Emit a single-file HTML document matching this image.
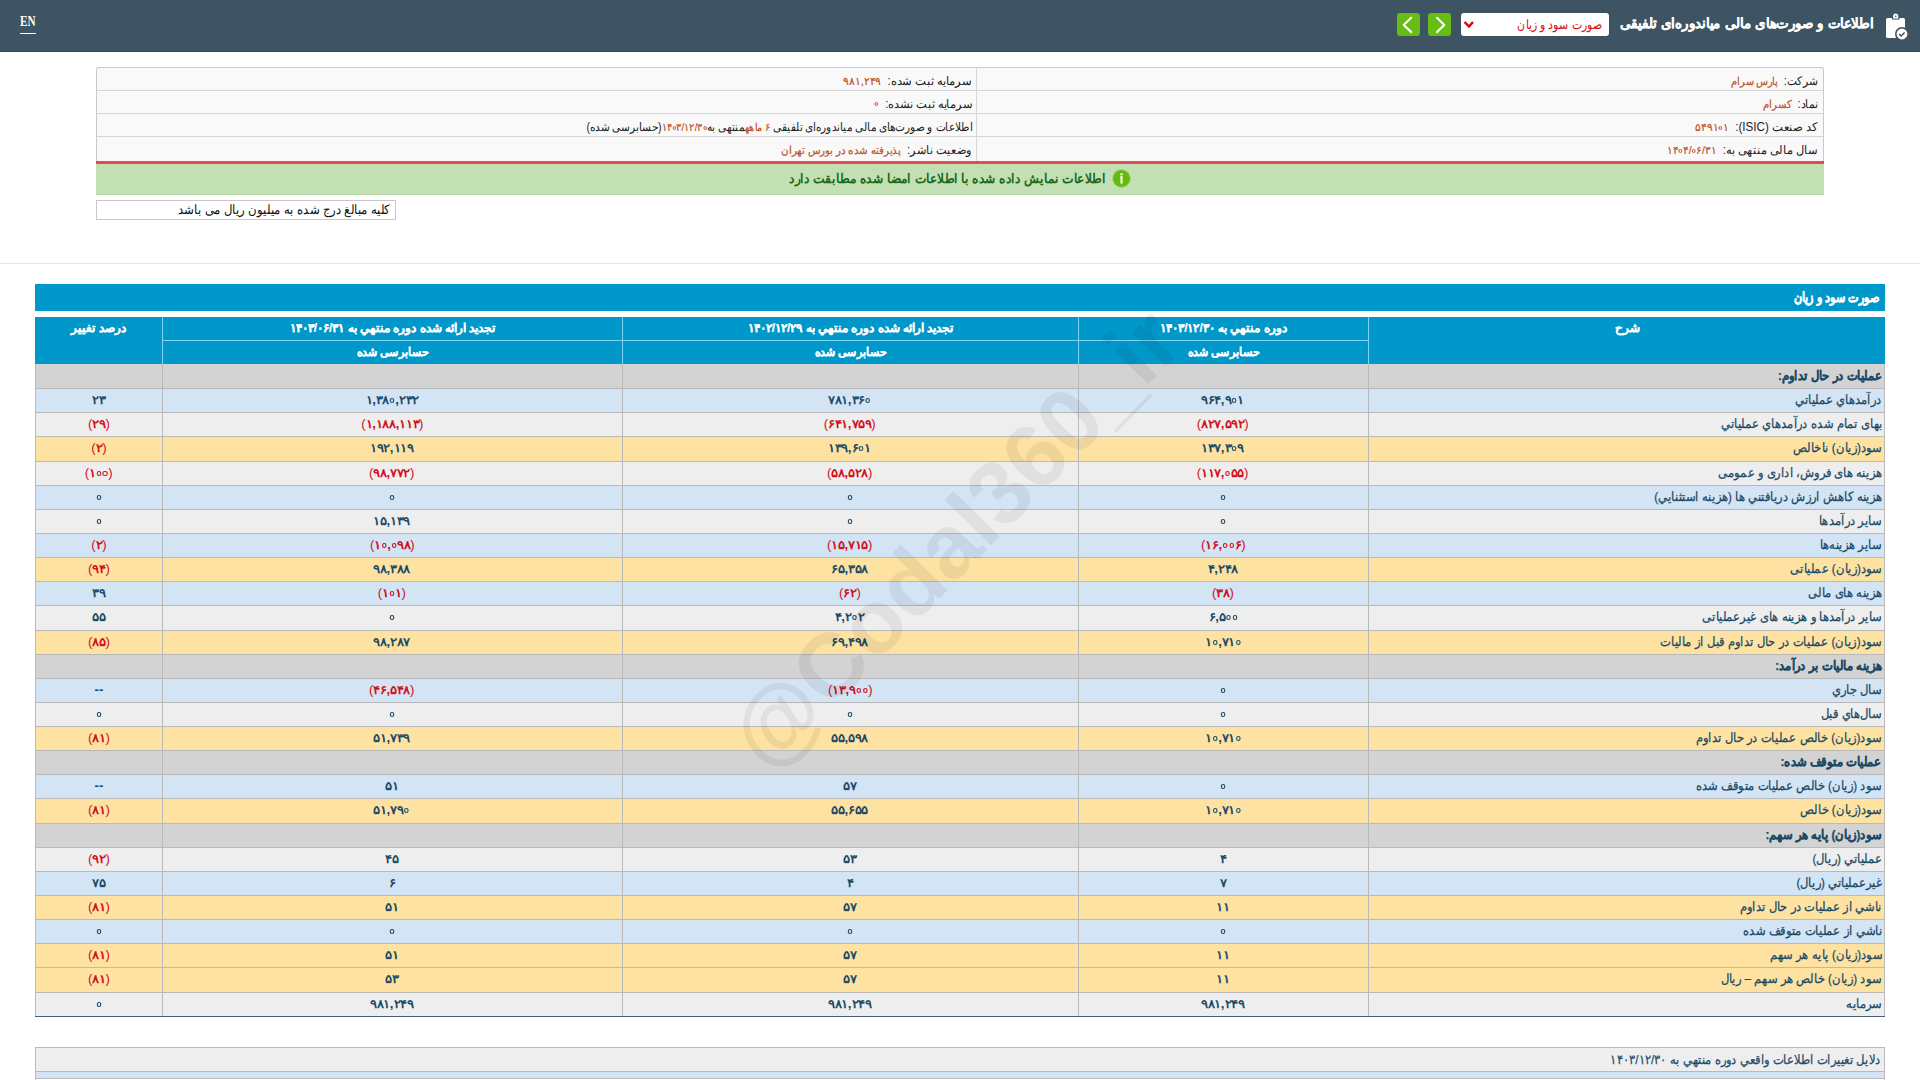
<!DOCTYPE html>
<html lang="fa" dir="rtl">
<head>
<meta charset="utf-8">
<title>صورت سود و زیان</title>
<style>
*{box-sizing:border-box;margin:0;padding:0}
html,body{width:1920px;height:1080px;overflow:hidden;background:#fff}
body{position:relative;font-family:"Liberation Sans",sans-serif;color:#1d4d6d;font-size:12px}
.abs{position:absolute}
/* header */
#hdr{position:absolute;left:0;top:0;width:1920px;height:52px;background:#3e5462;border-bottom:1px solid #36494f}
#en{position:absolute;left:20px;top:14px;font-family:"Liberation Serif",serif;font-size:14px;font-weight:bold;color:#fff;line-height:16px;direction:ltr;transform:scaleX(0.8);transform-origin:left center}
#enu{position:absolute;left:20px;top:33px;width:16px;height:1px;background:#fff}
#htitle{position:absolute;right:47px;top:14px;font-size:14px;font-weight:bold;color:#fff;line-height:18px;white-space:nowrap;transform:scaleX(0.955);transform-origin:right center;-webkit-text-stroke:0.2px #fff}
#sel{position:absolute;left:1461px;top:13px;width:148px;height:23px;background:#fff;border-radius:3px}
#seltxt{position:absolute;right:7px;top:3px;color:#d80c0c;font-size:13px;line-height:17px;white-space:nowrap;transform:scaleX(0.84);transform-origin:right center}
.gbtn{position:absolute;top:13px;width:23px;height:23px;background:#68bd14;border-radius:3px}
/* info box */
#info{position:absolute;left:96px;top:67px;width:1728px;height:94px;background:#f9f9f9;border:1px solid #cacaca;border-bottom:0;border-radius:3px 3px 0 0}
.irow{position:absolute;left:0;width:1726px;height:23px;border-top:1px solid #d6d6d6}
.idiv{position:absolute;left:879px;top:0;width:1px;height:93px;background:#d8d8d8}
.it{position:absolute;white-space:nowrap;font-size:12px;line-height:16px;color:#222;transform-origin:right center}
.it b{font-weight:normal;color:#bd521a;font-size:11px;-webkit-text-stroke:0.2px currentColor}
#red{position:absolute;left:96px;top:161px;width:1728px;height:3px;background:#e54c4c}
#green{position:absolute;left:96px;top:164px;width:1728px;height:31px;background:#c2e0b3;border-bottom:1px solid #b8d4a8}
#gtxt{position:absolute;right:718px;top:6px;color:#1a6a1a;font-size:13px;font-weight:bold;line-height:17px;white-space:nowrap;transform:scaleX(0.94);transform-origin:right center}
#gicon{position:absolute;left:1016px;top:5px;width:19px;height:19px;border-radius:50%;background:#68b814;border:1px solid #a6e07a}
#rial{position:absolute;left:96px;top:200px;width:300px;height:20px;border:1px solid #c8c8c8;background:#fff}
#rialt{position:absolute;right:5px;top:1px;font-size:13px;line-height:16px;color:#111;white-space:nowrap;transform:scaleX(0.903);transform-origin:right center}
#sep{position:absolute;left:0;top:263px;width:1920px;height:1px;background:#e6e6e6}
/* table */
#ttl{position:absolute;left:35px;top:284px;width:1850px;height:27px;background:#0097ca}
#ttlt{position:absolute;right:5px;top:4px;color:#fff;font-weight:bold;font-size:14px;line-height:18px;white-space:nowrap;transform:scaleX(0.8);transform-origin:right center;-webkit-text-stroke:0.35px #fff}
#th{position:absolute;left:35px;top:317px;width:1850px;height:47px;background:#0097ca}
.thl{position:absolute;background:#7dd4f4}
.tht{position:absolute;color:#fff;font-weight:bold;font-size:12px;line-height:16px;text-align:center;white-space:nowrap;-webkit-text-stroke:0.2px #fff}
#tb{position:absolute;left:35px;top:364px;width:1850px;height:653px}
.r{position:absolute;left:0;width:1850px;border-top:1px solid #b9b9b9}
.r.f{border-top:0}
.r.s{background:#d3d3d3}
.r.b{background:#d3e4f5}
.r.g{background:#eeeeee}
.r.y{background:#fde2a2}
.c{position:absolute;top:0;height:23px;line-height:23px;white-space:nowrap;font-size:12px;color:#1b4a66}
.r.f .c{top:1px}
.c span{display:inline-block}
.c0{left:1333px;width:517px;text-align:right;padding-right:3px;margin-top:-1px}
.c0 span{font-size:13px;transform:scaleX(0.89);transform-origin:right center;-webkit-text-stroke:0.25px currentColor}
.r.s .c0{font-weight:bold}
.c1,.c2,.c3,.c4{font-weight:bold}
.c1 span,.c2 span,.c3 span,.c4 span{transform:scaleX(1.1)}
.c1{left:1043px;width:290px;text-align:center}
.c2{left:587px;width:456px;text-align:center}
.c3{left:127px;width:460px;text-align:center}
.c4{left:0;width:127px;text-align:center}
.n{color:#d2101c}
i.p{font-style:normal;font-weight:normal}
i.z{display:inline-block;width:4.5px;height:4.5px;border:1.8px solid currentColor;border-radius:50%;margin:0 0.6px;vertical-align:1.5px}
.vl{position:absolute;top:0;width:1px;height:653px;background:#b9b9b9}
#tbb{position:absolute;left:35px;top:1016px;width:1850px;height:1px;background:#4a5f74}
/* second table */
#t2{position:absolute;left:35px;top:1047px;width:1850px;height:40px;border:1px solid #b9b9b9}
#t2a{position:absolute;left:0;top:0;width:1848px;height:24px;background:#eeeeee;border-bottom:1px solid #b9b9b9}
#t2at{position:absolute;right:3px;top:0;line-height:24px;font-size:13px;white-space:nowrap;transform:scaleX(0.89);transform-origin:right center;-webkit-text-stroke:0.25px currentColor}
#t2b{position:absolute;left:0;top:24px;width:1848px;height:7px;background:#d3e4f5;border-bottom:1px solid #b9b9b9}
#wm{position:absolute;left:505px;top:488px;width:900px;height:100px;line-height:100px;text-align:center;font-size:90px;font-weight:bold;color:rgba(0,0,0,0.058);transform:rotate(-45.7deg);white-space:nowrap;direction:ltr;pointer-events:none}
</style>
</head>
<body>
<div id="hdr">
  <div id="en">EN</div><div id="enu"></div>
  <svg class="abs" style="left:1884px;top:13px" width="26" height="28" viewBox="0 0 26 28">
    <rect x="2" y="5" width="19" height="20" rx="1.5" fill="#fff"/>
    <path d="M8.5 6 v-3 a3.2 3.2 0 0 1 6.4 0 v3 z" fill="#fff" stroke="#3e5462" stroke-width="1.2"/>
    <circle cx="11.7" cy="3.3" r="0.8" fill="#3e5462"/>
    <circle cx="18" cy="21" r="6.2" fill="#fff" stroke="#3e5462" stroke-width="1.6"/>
    <path d="M15.3 21.2 l1.9 1.8 l3.4 -3.5" fill="none" stroke="#3e5462" stroke-width="1.6"/>
  </svg>
  <div id="htitle">اطلاعات و صورت‌های مالی میاندوره‌ای تلفیقی</div>
  <div id="sel"><div id="seltxt">صورت سود و زیان</div>
    <svg class="abs" style="left:1px;top:7px" width="12" height="9" viewBox="0 0 12 9"><path d="M2.5 2 L7 6.5 L11 2" fill="none" stroke="#e00000" stroke-width="2.4"/></svg>
  </div>
  <div class="gbtn" style="left:1428px"><svg width="23" height="23" viewBox="0 0 23 23"><path d="M9 4.8 L16.3 11.9 L9 19.1" fill="none" stroke="#fff" stroke-width="2.1" stroke-linecap="round" stroke-linejoin="round"/></svg></div>
  <div class="gbtn" style="left:1397px"><svg width="23" height="23" viewBox="0 0 23 23"><path d="M14.2 4.8 L6.7 11.9 L14.2 19.1" fill="none" stroke="#fff" stroke-width="2.1" stroke-linecap="round" stroke-linejoin="round"/></svg></div>
</div>

<div id="info">
  <div class="irow" style="top:22px"></div>
  <div class="irow" style="top:45px"></div>
  <div class="irow" style="top:68px"></div>
  <div class="idiv"></div>
  <div class="it" style="transform:scaleX(0.895);right:5px;top:5px">شرکت:&nbsp; <b>پارس سرام</b></div>
  <div class="it" style="transform:scaleX(0.918);right:5px;top:28px">نماد:&nbsp; <b>کسرام</b></div>
  <div class="it" style="transform:scaleX(0.967);right:5px;top:51px">کد صنعت (ISIC):&nbsp; <b dir="ltr">۵۴۹۱<i class="z" style="width:4.2px;height:4.2px;border-width:1.3px;vertical-align:1px;margin:0 0.3px"></i>۱</b></div>
  <div class="it" style="transform:scaleX(0.956);right:5px;top:74px">سال مالی منتهی به:&nbsp; <b dir="ltr">۱۴<i class="z" style="width:4.2px;height:4.2px;border-width:1.3px;vertical-align:1px;margin:0 0.3px"></i>۴/<i class="z" style="width:4.2px;height:4.2px;border-width:1.3px;vertical-align:1px;margin:0 0.3px"></i>۶/۳۱</b></div>
  <div class="it" style="transform:scaleX(0.967);right:851px;top:5px">سرمایه ثبت شده:&nbsp; <b>۹۸۱,۲۴۹</b></div>
  <div class="it" style="transform:scaleX(0.957);right:851px;top:28px">سرمایه ثبت نشده:&nbsp; <b><i class="z" style="width:4.4px;height:4.4px;border-width:1.3px;vertical-align:2px"></i></b></div>
  <div class="it" style="transform:scaleX(0.878);right:851px;top:51px">اطلاعات و صورت‌های مالی میاندوره‌ای تلفیقی <b>۶ ماهه</b>منتهی به<b dir="ltr">۱۴<i class="z" style="width:4.2px;height:4.2px;border-width:1.3px;vertical-align:1px;margin:0 0.3px"></i>۳/۱۲/۳<i class="z" style="width:4.2px;height:4.2px;border-width:1.3px;vertical-align:1px;margin:0 0.3px"></i></b>(حسابرسی شده)</div>
  <div class="it" style="transform:scaleX(0.939);right:851px;top:74px">وضعیت ناشر:&nbsp; <b>پذیرفته شده در بورس تهران</b></div>
</div>
<div id="red"></div>
<div id="green">
  <div id="gtxt">اطلاعات نمایش داده شده با اطلاعات امضا شده مطابقت دارد</div>
  <div id="gicon"><svg class="abs" style="left:0;top:0" width="17" height="17" viewBox="0 0 17 17"><rect x="7.4" y="3.3" width="2.2" height="2" fill="#e6ffd0"/><rect x="7.4" y="6" width="2.2" height="7.6" fill="#e6ffd0"/></svg></div>
</div>
<div id="rial"><div id="rialt">کلیه مبالغ درج شده به میلیون ریال می باشد</div></div>
<div id="sep"></div>

<div id="ttl"><div id="ttlt">صورت سود و زیان</div></div>
<div id="th">
  <div class="thl" style="left:127px;top:0;width:1px;height:47px"></div>
  <div class="thl" style="left:587px;top:0;width:1px;height:47px"></div>
  <div class="thl" style="left:1043px;top:0;width:1px;height:47px"></div>
  <div class="thl" style="left:1333px;top:0;width:1px;height:47px"></div>
  <div class="thl" style="left:127px;top:23px;width:1206px;height:1px"></div>
  <div class="tht" style="left:1334px;width:516px;top:3px">شرح</div>
  <div class="tht" style="left:1044px;width:289px;top:3px">دوره منتهي به ۱۴۰۳/۱۲/۳۰</div>
  <div class="tht" style="left:588px;width:455px;top:3px">تجديد ارائه شده دوره منتهي به ۱۴۰۲/۱۲/۲۹</div>
  <div class="tht" style="left:128px;width:459px;top:3px">تجديد ارائه شده دوره منتهي به ۱۴۰۳/۰۶/۳۱</div>
  <div class="tht" style="left:0;width:127px;top:3px">درصد تغيير</div>
  <div class="tht" style="left:1044px;width:289px;top:27px;transform:scaleX(0.925)">حسابرسی شده</div>
  <div class="tht" style="left:588px;width:455px;top:27px;transform:scaleX(0.925)">حسابرسی شده</div>
  <div class="tht" style="left:128px;width:459px;top:27px;transform:scaleX(0.925)">حسابرسی شده</div>
</div>
<div id="tb">
<div class="r s f" style="top:0px;height:24px"><div class="c c0"><span>عملیات در حال تداوم:</span></div><div class="c c1"><span dir="ltr"></span></div><div class="c c2"><span dir="ltr"></span></div><div class="c c3"><span dir="ltr"></span></div><div class="c c4"><span dir="ltr"></span></div></div>
<div class="r b" style="top:24px;height:24px"><div class="c c0"><span>درآمدهاي عملياتي</span></div><div class="c c1"><span dir="ltr">۹۶۴,۹<i class="z"></i>۱</span></div><div class="c c2"><span dir="ltr">۷۸۱,۳۶<i class="z"></i></span></div><div class="c c3"><span dir="ltr">۱,۳۸<i class="z"></i>,۲۳۲</span></div><div class="c c4"><span dir="ltr">۲۳</span></div></div>
<div class="r g" style="top:48px;height:24px"><div class="c c0"><span>بهاى تمام شده درآمدهاي عملياتي</span></div><div class="c c1 n"><span dir="ltr"><i class="p">(</i>۸۲۷,۵۹۲<i class="p">)</i></span></div><div class="c c2 n"><span dir="ltr"><i class="p">(</i>۶۴۱,۷۵۹<i class="p">)</i></span></div><div class="c c3 n"><span dir="ltr"><i class="p">(</i>۱,۱۸۸,۱۱۳<i class="p">)</i></span></div><div class="c c4 n"><span dir="ltr"><i class="p">(</i>۲۹<i class="p">)</i></span></div></div>
<div class="r y" style="top:72px;height:25px"><div class="c c0"><span>سود(زيان) ناخالص</span></div><div class="c c1"><span dir="ltr">۱۳۷,۳<i class="z"></i>۹</span></div><div class="c c2"><span dir="ltr">۱۳۹,۶<i class="z"></i>۱</span></div><div class="c c3"><span dir="ltr">۱۹۲,۱۱۹</span></div><div class="c c4 n"><span dir="ltr"><i class="p">(</i>۲<i class="p">)</i></span></div></div>
<div class="r g" style="top:97px;height:24px"><div class="c c0"><span>هزينه هاى فروش، ادارى و عمومى</span></div><div class="c c1 n"><span dir="ltr"><i class="p">(</i>۱۱۷,<i class="z"></i>۵۵<i class="p">)</i></span></div><div class="c c2 n"><span dir="ltr"><i class="p">(</i>۵۸,۵۲۸<i class="p">)</i></span></div><div class="c c3 n"><span dir="ltr"><i class="p">(</i>۹۸,۷۷۲<i class="p">)</i></span></div><div class="c c4 n"><span dir="ltr"><i class="p">(</i>۱<i class="z"></i><i class="z"></i><i class="p">)</i></span></div></div>
<div class="r b" style="top:121px;height:24px"><div class="c c0"><span>هزينه کاهش ارزش دريافتني ها (هزينه استثنايي)</span></div><div class="c c1"><span dir="ltr"><i class="z"></i></span></div><div class="c c2"><span dir="ltr"><i class="z"></i></span></div><div class="c c3"><span dir="ltr"><i class="z"></i></span></div><div class="c c4"><span dir="ltr"><i class="z"></i></span></div></div>
<div class="r g" style="top:145px;height:24px"><div class="c c0"><span>ساير درآمدها</span></div><div class="c c1"><span dir="ltr"><i class="z"></i></span></div><div class="c c2"><span dir="ltr"><i class="z"></i></span></div><div class="c c3"><span dir="ltr">۱۵,۱۳۹</span></div><div class="c c4"><span dir="ltr"><i class="z"></i></span></div></div>
<div class="r b" style="top:169px;height:24px"><div class="c c0"><span>ساير هزينه‌ها</span></div><div class="c c1 n"><span dir="ltr"><i class="p">(</i>۱۶,<i class="z"></i><i class="z"></i>۶<i class="p">)</i></span></div><div class="c c2 n"><span dir="ltr"><i class="p">(</i>۱۵,۷۱۵<i class="p">)</i></span></div><div class="c c3 n"><span dir="ltr"><i class="p">(</i>۱<i class="z"></i>,<i class="z"></i>۹۸<i class="p">)</i></span></div><div class="c c4 n"><span dir="ltr"><i class="p">(</i>۲<i class="p">)</i></span></div></div>
<div class="r y" style="top:193px;height:24px"><div class="c c0"><span>سود(زيان) عملياتى</span></div><div class="c c1"><span dir="ltr">۴,۲۴۸</span></div><div class="c c2"><span dir="ltr">۶۵,۳۵۸</span></div><div class="c c3"><span dir="ltr">۹۸,۳۸۸</span></div><div class="c c4 n"><span dir="ltr"><i class="p">(</i>۹۴<i class="p">)</i></span></div></div>
<div class="r b" style="top:217px;height:24px"><div class="c c0"><span>هزينه هاى مالى</span></div><div class="c c1 n"><span dir="ltr"><i class="p">(</i>۳۸<i class="p">)</i></span></div><div class="c c2 n"><span dir="ltr"><i class="p">(</i>۶۲<i class="p">)</i></span></div><div class="c c3 n"><span dir="ltr"><i class="p">(</i>۱<i class="z"></i>۱<i class="p">)</i></span></div><div class="c c4"><span dir="ltr">۳۹</span></div></div>
<div class="r g" style="top:241px;height:25px"><div class="c c0"><span>ساير درآمدها و هزينه هاى غيرعملياتى</span></div><div class="c c1"><span dir="ltr">۶,۵<i class="z"></i><i class="z"></i></span></div><div class="c c2"><span dir="ltr">۴,۲<i class="z"></i>۲</span></div><div class="c c3"><span dir="ltr"><i class="z"></i></span></div><div class="c c4"><span dir="ltr">۵۵</span></div></div>
<div class="r y" style="top:266px;height:24px"><div class="c c0"><span>سود(زيان) عمليات در حال تداوم قبل از ماليات</span></div><div class="c c1"><span dir="ltr">۱<i class="z"></i>,۷۱<i class="z"></i></span></div><div class="c c2"><span dir="ltr">۶۹,۴۹۸</span></div><div class="c c3"><span dir="ltr">۹۸,۲۸۷</span></div><div class="c c4 n"><span dir="ltr"><i class="p">(</i>۸۵<i class="p">)</i></span></div></div>
<div class="r s" style="top:290px;height:24px"><div class="c c0"><span>هزينه ماليات بر درآمد:</span></div><div class="c c1"><span dir="ltr"></span></div><div class="c c2"><span dir="ltr"></span></div><div class="c c3"><span dir="ltr"></span></div><div class="c c4"><span dir="ltr"></span></div></div>
<div class="r b" style="top:314px;height:24px"><div class="c c0"><span>سال جاري</span></div><div class="c c1"><span dir="ltr"><i class="z"></i></span></div><div class="c c2 n"><span dir="ltr"><i class="p">(</i>۱۳,۹<i class="z"></i><i class="z"></i><i class="p">)</i></span></div><div class="c c3 n"><span dir="ltr"><i class="p">(</i>۴۶,۵۴۸<i class="p">)</i></span></div><div class="c c4"><span dir="ltr">--</span></div></div>
<div class="r g" style="top:338px;height:24px"><div class="c c0"><span>سال‌هاي قبل</span></div><div class="c c1"><span dir="ltr"><i class="z"></i></span></div><div class="c c2"><span dir="ltr"><i class="z"></i></span></div><div class="c c3"><span dir="ltr"><i class="z"></i></span></div><div class="c c4"><span dir="ltr"><i class="z"></i></span></div></div>
<div class="r y" style="top:362px;height:24px"><div class="c c0"><span>سود(زيان) خالص عمليات در حال تداوم</span></div><div class="c c1"><span dir="ltr">۱<i class="z"></i>,۷۱<i class="z"></i></span></div><div class="c c2"><span dir="ltr">۵۵,۵۹۸</span></div><div class="c c3"><span dir="ltr">۵۱,۷۳۹</span></div><div class="c c4 n"><span dir="ltr"><i class="p">(</i>۸۱<i class="p">)</i></span></div></div>
<div class="r s" style="top:386px;height:24px"><div class="c c0"><span>عمليات متوقف شده:</span></div><div class="c c1"><span dir="ltr"></span></div><div class="c c2"><span dir="ltr"></span></div><div class="c c3"><span dir="ltr"></span></div><div class="c c4"><span dir="ltr"></span></div></div>
<div class="r b" style="top:410px;height:24px"><div class="c c0"><span>سود (زيان) خالص عمليات متوقف شده</span></div><div class="c c1"><span dir="ltr"><i class="z"></i></span></div><div class="c c2"><span dir="ltr">۵۷</span></div><div class="c c3"><span dir="ltr">۵۱</span></div><div class="c c4"><span dir="ltr">--</span></div></div>
<div class="r y" style="top:434px;height:25px"><div class="c c0"><span>سود(زيان) خالص</span></div><div class="c c1"><span dir="ltr">۱<i class="z"></i>,۷۱<i class="z"></i></span></div><div class="c c2"><span dir="ltr">۵۵,۶۵۵</span></div><div class="c c3"><span dir="ltr">۵۱,۷۹<i class="z"></i></span></div><div class="c c4 n"><span dir="ltr"><i class="p">(</i>۸۱<i class="p">)</i></span></div></div>
<div class="r s" style="top:459px;height:24px"><div class="c c0"><span>سود(زيان) پايه هر سهم:</span></div><div class="c c1"><span dir="ltr"></span></div><div class="c c2"><span dir="ltr"></span></div><div class="c c3"><span dir="ltr"></span></div><div class="c c4"><span dir="ltr"></span></div></div>
<div class="r g" style="top:483px;height:24px"><div class="c c0"><span>عملياتي (ريال)</span></div><div class="c c1"><span dir="ltr">۴</span></div><div class="c c2"><span dir="ltr">۵۳</span></div><div class="c c3"><span dir="ltr">۴۵</span></div><div class="c c4 n"><span dir="ltr"><i class="p">(</i>۹۲<i class="p">)</i></span></div></div>
<div class="r b" style="top:507px;height:24px"><div class="c c0"><span>غيرعملياتي (ريال)</span></div><div class="c c1"><span dir="ltr">۷</span></div><div class="c c2"><span dir="ltr">۴</span></div><div class="c c3"><span dir="ltr">۶</span></div><div class="c c4"><span dir="ltr">۷۵</span></div></div>
<div class="r y" style="top:531px;height:24px"><div class="c c0"><span>ناشي از عمليات در حال تداوم</span></div><div class="c c1"><span dir="ltr">۱۱</span></div><div class="c c2"><span dir="ltr">۵۷</span></div><div class="c c3"><span dir="ltr">۵۱</span></div><div class="c c4 n"><span dir="ltr"><i class="p">(</i>۸۱<i class="p">)</i></span></div></div>
<div class="r b" style="top:555px;height:24px"><div class="c c0"><span>ناشي از عمليات متوقف شده</span></div><div class="c c1"><span dir="ltr"><i class="z"></i></span></div><div class="c c2"><span dir="ltr"><i class="z"></i></span></div><div class="c c3"><span dir="ltr"><i class="z"></i></span></div><div class="c c4"><span dir="ltr"><i class="z"></i></span></div></div>
<div class="r y" style="top:579px;height:24px"><div class="c c0"><span>سود(زيان) پايه هر سهم</span></div><div class="c c1"><span dir="ltr">۱۱</span></div><div class="c c2"><span dir="ltr">۵۷</span></div><div class="c c3"><span dir="ltr">۵۱</span></div><div class="c c4 n"><span dir="ltr"><i class="p">(</i>۸۱<i class="p">)</i></span></div></div>
<div class="r y" style="top:603px;height:25px"><div class="c c0"><span>سود (زيان) خالص هر سهم – ريال</span></div><div class="c c1"><span dir="ltr">۱۱</span></div><div class="c c2"><span dir="ltr">۵۷</span></div><div class="c c3"><span dir="ltr">۵۳</span></div><div class="c c4 n"><span dir="ltr"><i class="p">(</i>۸۱<i class="p">)</i></span></div></div>
<div class="r g" style="top:628px;height:24px"><div class="c c0"><span>سرمايه</span></div><div class="c c1"><span dir="ltr">۹۸۱,۲۴۹</span></div><div class="c c2"><span dir="ltr">۹۸۱,۲۴۹</span></div><div class="c c3"><span dir="ltr">۹۸۱,۲۴۹</span></div><div class="c c4"><span dir="ltr"><i class="z"></i></span></div></div>
  <div class="vl" style="left:0"></div>
  <div class="vl" style="left:127px"></div>
  <div class="vl" style="left:587px"></div>
  <div class="vl" style="left:1043px"></div>
  <div class="vl" style="left:1333px"></div>
  <div class="vl" style="left:1849px"></div>
</div>
<div id="tbb"></div>

<div id="t2">
  <div id="t2a"><div id="t2at">دلايل تغييرات اطلاعات واقعي دوره منتهي به ۱۴۰۳/۱۲/۳۰</div></div>
  <div id="t2b"></div>
</div>

<div id="wm">@Codal360_ir</div>
</body>
</html>
